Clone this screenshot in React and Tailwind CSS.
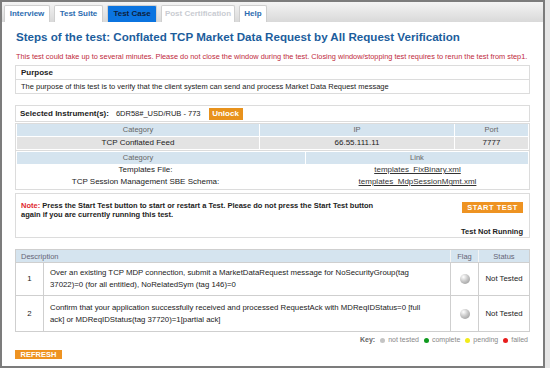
export default function App() {
  const tab = "h-[17px] flex items-center justify-center text-[8px] font-bold border border-[#cfcfcf] border-b-0 rounded-t-[2px]";
  const dot = "w-[10px] h-[10px] rounded-full bg-[radial-gradient(circle_at_35%_30%,#ffffff,#c8c8c8_45%,#8f8f8f)]";
  return (
    <div className="w-[550px] h-[368px] bg-[#e6e6e6] font-['Liberation_Sans',Arial,sans-serif] text-[#222]">
      <div className="w-[545px] h-[368px] border-2 border-[#7c7c7c] bg-white flex flex-col">
        {/* tab bar */}
        <div className="h-[20px] bg-gradient-to-b from-[#f4f4f4] to-[#d9d9d9] flex items-end pl-[2px] gap-[4px] shrink-0">
          <div className={tab + " w-[46px] bg-white text-[#2d6cb0]"}>Interview</div>
          <div className={tab + " w-[49px] bg-white text-[#2d6cb0]"}>Test Suite</div>
          <div className={tab + " w-[50px] bg-[#0b74e0] border-[#0b74e0] text-[#0d1f3d]"}>Test Case</div>
          <div className={tab + " w-[74px] bg-white text-[#c9ccd2]"}>Post Certification</div>
          <div className={tab + " w-[28px] bg-white text-[#2d6cb0]"}>Help</div>
        </div>

        <div className="px-[13px] flex flex-col">
          <div className="mt-[7px] h-[15px] leading-[15px] text-[11.6px] font-bold text-[#1c5d9c] pl-[1px] whitespace-nowrap">
            Steps of the test: Conflated TCP Market Data Request by All Request Verification
          </div>
          <div className="mt-[8px] h-[10px] leading-[10px] text-[7.37px] text-[#c0293b] pl-[1px] whitespace-nowrap">
            This test could take up to several minutes. Please do not close the window during the test. Closing window/stopping test requires to rerun the test from step1.
          </div>

          {/* Purpose */}
          <div className="mt-[3px] border border-[#dcdcdc] flex flex-col">
            <div className="h-[14px] leading-[14px] text-[8px] font-bold px-[5px] border-b border-[#dcdcdc]">Purpose</div>
            <div className="h-[13px] leading-[13px] text-[7.5px] px-[5px]">
              The purpose of this test is to verify that the client system can send and process Market Data Request message
            </div>
          </div>

          {/* Selected instrument */}
          <div className="mt-[11px] h-[17px] border border-[#dcdcdc] flex items-center px-[4px] text-[8px]">
            <span className="font-bold">Selected Instrument(s):</span>
            <span className="ml-[7px] text-[7.5px]">6DR58#_USD/RUB - 773</span>
            <span className="ml-[8px] h-[12px] w-[34px] bg-[#e8921c] text-white font-bold flex items-center justify-center">Unlock</span>
          </div>

          {/* Category / IP / Port */}
          <div className="mt-[1px] border border-[#dcdcdc] text-[8px] flex flex-col">
            <div className="flex gap-[1px] h-[12px] leading-[12px] text-[#666] text-[7.5px] px-[1px]">
              <div className="w-[242px] bg-[#d5e4ef] text-center">Category</div>
              <div className="w-[194px] bg-[#d5e4ef] text-center">IP</div>
              <div className="flex-1 bg-[#d5e4ef] text-center">Port</div>
            </div>
            <div className="flex gap-[1px] h-[12px] leading-[12px] mt-[1px] px-[1px]">
              <div className="w-[242px] bg-[#e3e3e3] text-center">TCP Conflated Feed</div>
              <div className="w-[194px] bg-[#e3e3e3] text-center">66.55.111.11</div>
              <div className="flex-1 bg-[#e3e3e3] text-center">7777</div>
            </div>
            <div className="h-[1px] bg-[#dcdcdc] mt-[1px]"></div>
            <div className="flex gap-[1px] h-[12px] leading-[12px] text-[#666] text-[7.5px] mt-[1px] px-[1px]">
              <div className="w-[288px] bg-[#d5e4ef] text-center pr-[46px]">Category</div>
              <div className="flex-1 bg-[#d5e4ef] text-center">Link</div>
            </div>
            <div className="flex gap-[1px] h-[12px] leading-[12px]">
              <div className="w-[289px] text-center pr-[30px]">Templates File:</div>
              <div className="flex-1 text-center"><span className="underline text-[#333]">templates_FixBinary.xml</span></div>
            </div>
            <div className="flex gap-[1px] h-[13px] leading-[12px]">
              <div className="w-[289px] text-center pr-[30px]">TCP Session Management SBE Schema:</div>
              <div className="flex-1 text-center"><span className="underline text-[#333]">templates_MdpSessionMgmt.xml</span></div>
            </div>
          </div>

          {/* Note */}
          <div className="mt-[3px] h-[45px] border border-[#dcdcdc] flex px-[5px] pt-[7px] text-[7.5px]">
            <div className="flex-1 font-bold leading-[9px]">
              <span className="text-[#e0282e]">Note: </span>Press the Start Test button to start or restart a Test. Please do not press the Start Test button<br />again if you are currently running this test.
            </div>
            <div className="flex flex-col items-end w-[70px] pr-[1px]">
              <div className="h-[11px] w-[61px] bg-[#ee9322] text-white font-bold text-[7.5px] tracking-[0.5px] flex items-center justify-center mt-[1px]">START TEST</div>
              <div className="mt-[13px] font-bold text-[7.5px] whitespace-nowrap">Test Not Running</div>
            </div>
          </div>

          {/* Description table */}
          <div className="mt-[11px] border border-[#cfcfcf] text-[7.8px] flex flex-col">
            <div className="flex h-[13px] leading-[13px] bg-[#d5e4ef] text-[#667] text-[7.5px] border-b border-[#cfcfcf]">
              <div className="flex-1 px-[5px]">Description</div>
              <div className="w-[28px] text-center border-l border-[#f4f4f4]">Flag</div>
              <div className="w-[51px] text-center border-l border-[#f4f4f4]">Status</div>
            </div>
            <div className="flex h-[33px] border-b border-[#cfcfcf]">
              <div className="w-[28px] flex items-center justify-center border-r border-[#cfcfcf]">1</div>
              <div className="flex-1 px-[6px] flex items-center leading-[12px]">
                <div>Over an existing TCP MDP connection, submit a MarketDataRequest message for NoSecurityGroup(tag<br />37022)=0 (for all entitled), NoRelatedSym (tag 146)=0</div>
              </div>
              <div className="w-[28px] flex items-center justify-center border-l border-[#cfcfcf]">
                <span className={dot}></span>
              </div>
              <div className="w-[51px] flex items-center justify-center border-l border-[#cfcfcf]">Not Tested</div>
            </div>
            <div className="flex h-[35px]">
              <div className="w-[28px] flex items-center justify-center border-r border-[#cfcfcf]">2</div>
              <div className="flex-1 px-[6px] flex items-center leading-[12px]">
                <div>Confirm that your application successfully received and processed RequestAck with MDReqIDStatus=0 [full<br />ack] or MDReqIDStatus(tag 37720)=1[partial ack]</div>
              </div>
              <div className="w-[28px] flex items-center justify-center border-l border-[#cfcfcf]">
                <span className={dot}></span>
              </div>
              <div className="w-[51px] flex items-center justify-center border-l border-[#cfcfcf]">Not Tested</div>
            </div>
          </div>

          {/* Key */}
          <div className="mt-[4px] h-[9px] flex items-center justify-end gap-[3px] text-[7px] text-[#888] pr-[2px]">
            <span className="font-bold text-[#666]">Key:</span>
            <span className="w-[5px] h-[5px] rounded-full bg-[#c4c4c4] ml-[2px]"></span><span>not tested</span>
            <span className="w-[5px] h-[5px] rounded-full bg-[#0f9a1e] ml-[2px]"></span><span>complete</span>
            <span className="w-[5px] h-[5px] rounded-full bg-[#f2ec1a] ml-[2px]"></span><span>pending</span>
            <span className="w-[5px] h-[5px] rounded-full bg-[#e81c1c] ml-[2px]"></span><span>failed</span>
          </div>

          {/* Refresh */}
          <div className="mt-[5px] h-[9px] w-[47px] bg-[#ee9322] text-white font-bold text-[7.5px] flex items-center justify-center">REFRESH</div>
        </div>
      </div>
    </div>
  );
}
